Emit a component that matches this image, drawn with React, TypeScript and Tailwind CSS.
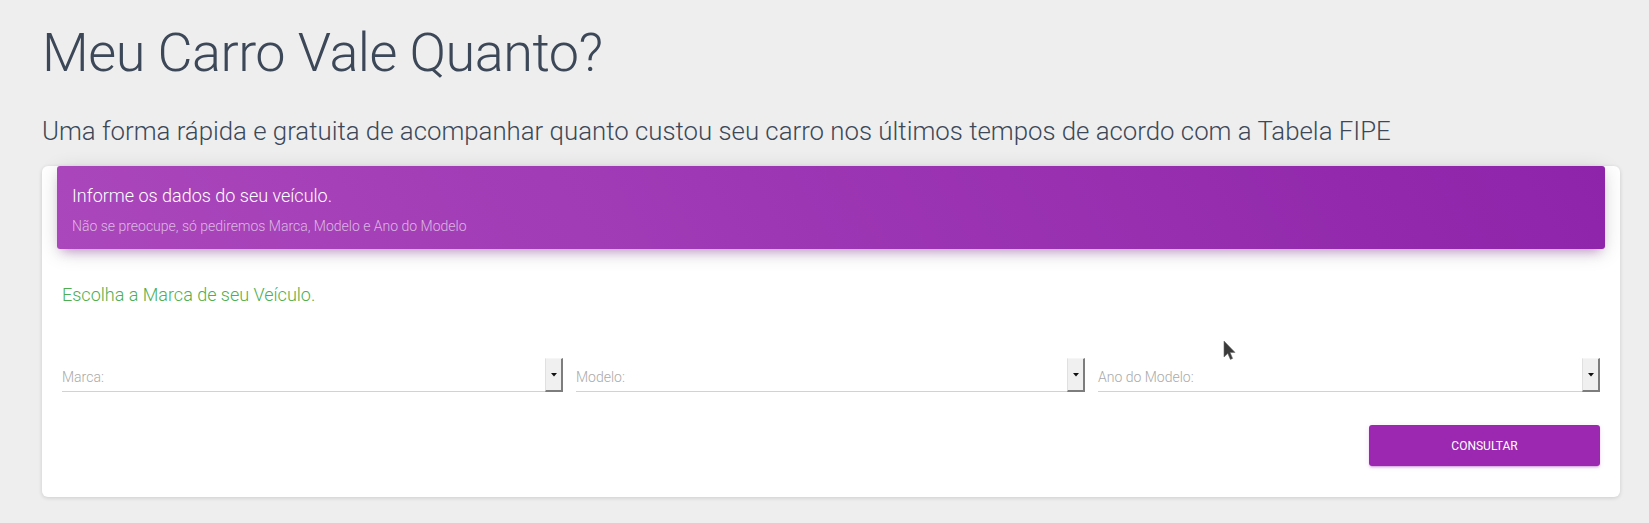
import React from "react";

function SelectField({ label }: { label: string }) {
  return (
    <div className="flex items-end h-[34px]">
      <div className="flex-1 h-full flex items-end border-b border-[#d2d2d2] pb-[4px]">
        <span className="text-[14px] leading-[20px] font-light text-[#aaaaaa]">{label}</span>
      </div>
      <div className="w-[18px] h-[34px] bg-[#f0f0f0] border-l border-l-[#e0e0e0] border-t border-t-[#f6f6f6] border-r-2 border-r-[#7d7d7d] border-b-2 border-b-[#7d7d7d] flex items-center justify-center">
        <svg width="6" height="4" viewBox="0 0 6 4">
          <path d="M0 0 H6 L3 3.5 Z" fill="#111" />
        </svg>
      </div>
    </div>
  );
}

export default function App() {
  return (
    <div
      className="min-h-[523px] w-full bg-[#eeeeee] relative"
      style={{ fontFamily: "Roboto, 'Noto Sans', sans-serif" }}
    >
      <div className="pl-[42px] pr-[29px] pt-[21px]">
        <h1 className="text-[54px] leading-[64px] tracking-[-0.5px] font-light text-[#3c4858]">Meu Carro Vale Quanto?</h1>
        <p className="mt-[30px] text-[25.8px] leading-[32px] font-light text-[#3c4858]">
          Uma forma rápida e gratuita de acompanhar quanto custou seu carro nos últimos tempos de acordo com a Tabela FIPE
        </p>
        <div className="mt-[39px] bg-white rounded-[6px] shadow-[0_1px_4px_0_rgba(0,0,0,0.14)] w-[1578px]">
          <div className="mx-[15px] -mt-[20px] relative rounded-[3px] bg-[linear-gradient(60deg,#ab47bc,#8e24aa)] shadow-[0_4px_20px_0_rgba(0,0,0,0.14),0_7px_10px_-5px_rgba(156,39,176,0.4)] px-[15px] pt-[18px] pb-[13px]">
            <h4 className="text-[18px] leading-[24px] font-light text-white">Informe os dados do seu veículo.</h4>
            <p className="mt-[8px] text-[14px] leading-[20px] font-light text-[rgba(255,255,255,0.62)]">
              Não se preocupe, só pediremos Marca, Modelo e Ano do Modelo
            </p>
          </div>
          <div className="px-[20px] pt-[34px] pb-[31px]">
            <h4 className="text-[18px] leading-[24px] font-light text-[#4caf50]">Escolha a Marca de seu Veículo.</h4>
            <div className="mt-[51px] grid grid-cols-[501fr_509fr_502fr] gap-[13px]">
              <SelectField label="Marca:" />
              <SelectField label="Modelo:" />
              <SelectField label="Ano do Modelo:" />
            </div>
            <div className="mt-[33px] flex justify-end">
              <button className="w-[231px] h-[41px] rounded-[3px] bg-[#9c27b0] text-white text-[12px] font-normal uppercase shadow-[0_2px_2px_0_rgba(156,39,176,0.14),0_3px_1px_-2px_rgba(156,39,176,0.2),0_1px_5px_0_rgba(156,39,176,0.12)]">
                Consultar
              </button>
            </div>
          </div>
        </div>
      </div>
      <svg
        className="absolute left-[1223px] top-[340px]"
        width="13"
        height="21"
        viewBox="0 0 13 21"
      >
        <path d="M1 1 L1 17 L4.8 13.4 L7.4 19.4 L9.6 18.4 L7.1 12.6 L12 12.4 Z" fill="#3a3a3a" stroke="#6a6a6a" strokeWidth="0.6" />
      </svg>
    </div>
  );
}
